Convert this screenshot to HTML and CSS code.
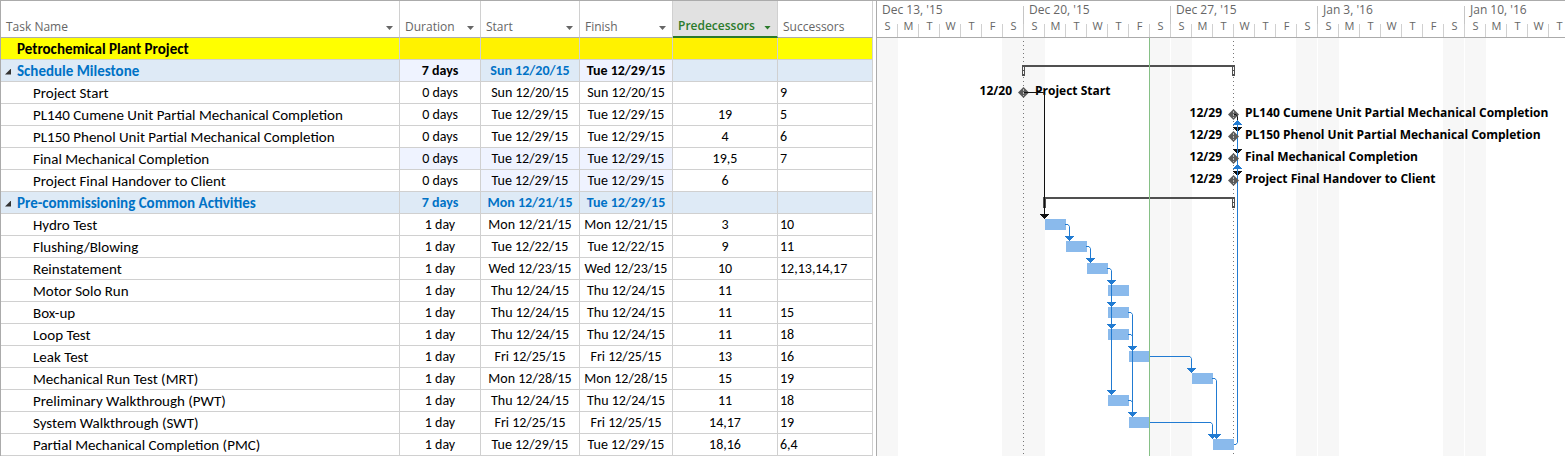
FILE: index.html
```html
<!DOCTYPE html>
<html lang="en">
<head>
<meta charset="utf-8">
<title>Petrochemical Plant Project</title>
<link rel="stylesheet" href="styles.css">
</head>
<body>
<main class="project">
<section class="sheet">
<table class="tasks">
<colgroup><col class="col-name"><col class="col-duration"><col class="col-start"><col class="col-finish"><col class="col-pred"><col class="col-succ"></colgroup>
<thead>
<tr>
<th><div class="head">Task Name<button class="drop" aria-label="Filter Task Name"></button></div></th>
<th><div class="head">Duration<button class="drop" aria-label="Filter Duration"></button></div></th>
<th><div class="head">Start<button class="drop" aria-label="Filter Start"></button></div></th>
<th><div class="head">Finish<button class="drop" aria-label="Filter Finish"></button></div></th>
<th class="active"><div class="head">Predecessors<button class="drop" aria-label="Filter Predecessors"></button></div></th>
<th><div class="head">Successors</div></th>
</tr>
</thead>
<tbody>
<tr class="project-row"><td class="top">Petrochemical Plant Project</td><td></td><td></td><td></td><td></td><td class="bright"></td></tr>
<tr class="summary"><td class="top"><button class="fold" aria-label="Collapse Schedule Milestone"></button>Schedule Milestone</td><td class="changed dark">7 days</td><td>Sun 12/20/15</td><td class="changed dark">Tue 12/29/15</td><td></td><td></td></tr>
<tr><td>Project Start</td><td>0 days</td><td>Sun 12/20/15</td><td>Sun 12/20/15</td><td></td><td>9</td></tr>
<tr><td>PL140 Cumene Unit Partial Mechanical Completion</td><td>0 days</td><td>Tue 12/29/15</td><td>Tue 12/29/15</td><td>19</td><td>5</td></tr>
<tr><td>PL150 Phenol Unit Partial Mechanical Completion</td><td>0 days</td><td>Tue 12/29/15</td><td>Tue 12/29/15</td><td>4</td><td>6</td></tr>
<tr><td>Final Mechanical Completion</td><td class="changed">0 days</td><td class="changed">Tue 12/29/15</td><td class="changed">Tue 12/29/15</td><td>19,5</td><td>7</td></tr>
<tr><td>Project Final Handover to Client</td><td>0 days</td><td class="changed">Tue 12/29/15</td><td class="changed">Tue 12/29/15</td><td>6</td><td></td></tr>
<tr class="summary"><td class="top"><button class="fold" aria-label="Collapse Pre-commissioning Common Activities"></button>Pre-commissioning Common Activities</td><td>7 days</td><td>Mon 12/21/15</td><td>Tue 12/29/15</td><td></td><td></td></tr>
<tr><td>Hydro Test</td><td>1 day</td><td>Mon 12/21/15</td><td>Mon 12/21/15</td><td>3</td><td>10</td></tr>
<tr><td>Flushing/Blowing</td><td>1 day</td><td>Tue 12/22/15</td><td>Tue 12/22/15</td><td>9</td><td>11</td></tr>
<tr><td>Reinstatement</td><td>1 day</td><td>Wed 12/23/15</td><td>Wed 12/23/15</td><td>10</td><td>12,13,14,17</td></tr>
<tr><td>Motor Solo Run</td><td>1 day</td><td>Thu 12/24/15</td><td>Thu 12/24/15</td><td>11</td><td></td></tr>
<tr><td>Box-up</td><td>1 day</td><td>Thu 12/24/15</td><td>Thu 12/24/15</td><td>11</td><td>15</td></tr>
<tr><td>Loop Test</td><td>1 day</td><td>Thu 12/24/15</td><td>Thu 12/24/15</td><td>11</td><td>18</td></tr>
<tr><td>Leak Test</td><td>1 day</td><td>Fri 12/25/15</td><td>Fri 12/25/15</td><td>13</td><td>16</td></tr>
<tr><td>Mechanical Run Test (MRT)</td><td>1 day</td><td>Mon 12/28/15</td><td>Mon 12/28/15</td><td>15</td><td>19</td></tr>
<tr><td>Preliminary Walkthrough (PWT)</td><td>1 day</td><td>Thu 12/24/15</td><td>Thu 12/24/15</td><td>11</td><td>18</td></tr>
<tr><td>System Walkthrough (SWT)</td><td>1 day</td><td>Fri 12/25/15</td><td>Fri 12/25/15</td><td>14,17</td><td>19</td></tr>
<tr><td>Partial Mechanical Completion (PMC)</td><td>1 day</td><td>Tue 12/29/15</td><td>Tue 12/29/15</td><td>18,16</td><td>6,4</td></tr>
</tbody>
</table>
</section>
<section class="gantt">
<header class="scale">
<div class="week"><div class="week-name">Dec 13, '15</div><div class="days"><span>S</span><span>M</span><span>T</span><span>W</span><span>T</span><span>F</span><span>S</span></div></div>
<div class="week"><div class="week-name">Dec 20, '15</div><div class="days"><span>S</span><span>M</span><span>T</span><span>W</span><span>T</span><span>F</span><span>S</span></div></div>
<div class="week"><div class="week-name">Dec 27, '15</div><div class="days"><span>S</span><span>M</span><span>T</span><span>W</span><span>T</span><span>F</span><span>S</span></div></div>
<div class="week"><div class="week-name">Jan 3, '16</div><div class="days"><span>S</span><span>M</span><span>T</span><span>W</span><span>T</span><span>F</span><span>S</span></div></div>
<div class="week"><div class="week-name">Jan 10, '16</div><div class="days"><span>S</span><span>M</span><span>T</span><span>W</span><span>T</span></div></div>
</header>
<svg class="chart" width="734" height="418" viewBox="877 38 734 418" role="img" aria-label="Gantt chart">
<defs>
<path id="down" d="M-4.500 -5h9v1h-1v1h-1v1h-1v1h-1v1h-1v-1h-1v-1h-1v-1h-1v-1h-1z"/>
<path id="up" d="M-4.500 5h9v-1h-1v-1h-1v-1h-1v-1h-1v-1h-1v1h-1v1h-1v1h-1v1h-1z"/>
<g id="milestone"><path d="M.5-5L6 .5.5 6-5 .5z"/><path class="facet" d="M.5-3v7"/></g>
</defs>
<g class="weekend">
<path d="M877 38h21v418h-21zM1002 38h43v418h-43zM1149 38h21v418h-21zM1171 38h21v418h-21zM1296 38h21v418h-21zM1318 38h21v418h-21zM1443 38h21v418h-21zM1465 38h21v418h-21zM1590 38h21v418h-21z"/>
</g>
<path class="marker" d="M1023.500 41V456M1233.500 41V456"/>
<g class="span">
<path d="M1022 65h213v11h-3v-9h-207v9h-3z"/><path d="M1043 197h192v11h-3v-9h-186v9h-3z"/>
<path class="notch" d="M1023.500 67v8M1233.500 67v8M1233.500 199v8"/>
</g>
<g class="bars">
<rect x="1045" y="219" width="21" height="11"/><rect x="1066" y="241" width="21" height="11"/><rect x="1087" y="263" width="21" height="11"/><rect x="1108" y="285" width="21" height="11"/><rect x="1108" y="307" width="21" height="11"/><rect x="1108" y="329" width="21" height="11"/><rect x="1129" y="351" width="21" height="11"/><rect x="1192" y="373" width="21" height="11"/><rect x="1108" y="395" width="21" height="11"/><rect x="1129" y="417" width="21" height="11"/><rect x="1213" y="439" width="21" height="11"/>
</g>
<path class="today" d="M1149.500 38V456"/>
<g class="links">
<path d="M1065 224.500h3l1.500 2V238M1086 246.500h3l1.500 2V260M1107 268.500h3l1.500 2V392M1128 312.500h3l1.500 2V414M1128 334.500h3l1.500 2M1128 400.500h3l1.500 2M1150 356.500h40l1.500 2V370M1212 378.500h3l1.500 2V436M1150 422.500h61l1.500 2V436M1234 444.500h2l1.500-2V123"/>
</g>
<g class="heads">
<use href="#down" x="1069.500" y="241"/><use href="#down" x="1090.500" y="263"/><use href="#down" x="1111.500" y="285"/><use href="#down" x="1111.500" y="307"/><use href="#down" x="1111.500" y="329"/><use href="#down" x="1111.500" y="395"/><use href="#down" x="1132.500" y="351"/><use href="#down" x="1132.500" y="417"/><use href="#down" x="1191.500" y="373"/><use href="#down" x="1212.500" y="439"/><use href="#down" x="1216.500" y="439"/>
<use href="#up" x="1237.500" y="120"/><use href="#up" x="1237.500" y="164"/>
</g>
<g class="critical-heads"><use href="#down" x="1044.500" y="219"/><use href="#down" x="1237.500" y="132"/><use href="#down" x="1237.500" y="154"/><use href="#down" x="1237.500" y="176"/></g>
<path class="links" d="M1237.500 125V200"/>
<g class="milestones">
<use href="#milestone" x="1023" y="92"/><use href="#milestone" x="1233" y="114"/><use href="#milestone" x="1233" y="136"/><use href="#milestone" x="1233" y="158"/><use href="#milestone" x="1233" y="180"/>
</g>
<g class="dates"><text x="1012" y="95">12/20</text><text x="1222" y="117">12/29</text><text x="1222" y="139">12/29</text><text x="1222" y="161">12/29</text><text x="1222" y="183">12/29</text></g>
<g class="names"><text x="1035" y="95">Project Start</text><text x="1245" y="117">PL140 Cumene Unit Partial Mechanical Completion</text><text x="1245" y="139">PL150 Phenol Unit Partial Mechanical Completion</text><text x="1245" y="161">Final Mechanical Completion</text><text x="1245" y="183">Project Final Handover to Client</text></g>
<path class="critical" d="M1024 92.500h19l1.500 1V215M1234 114.500h2l1.500 2V120"/>
</svg>
</section>
</main>
</body>
</html>
```
FILE: styles.css
```css
* { box-sizing: border-box; }
body { margin: 0; background: #fff; color: #000; font-family: Carlito, Lato, sans-serif; font-size: 14px; }
.project { display: flex; gap: 3px; border-top: 1px solid #ababab; overflow: hidden; }
.sheet { flex: none; border-left: 1px solid #ababab; }
.tasks { border-collapse: separate; border-spacing: 0; table-layout: fixed; width: 872px; }
.col-name { width: 399px; }
.col-duration { width: 81px; }
.col-start { width: 99px; }
.col-finish { width: 93px; }
.col-pred { width: 105px; }
.col-succ { width: 95px; }
th, td { padding: 0; border-right: 1px solid #d0d0d0; white-space: nowrap; }
th { height: 37px; border-bottom: 1px solid #ababab; font-family: "Open Sans", sans-serif; font-size: 12px; font-weight: 400; color: #666; vertical-align: bottom; }
.head { display: flex; align-items: center; justify-content: space-between; height: 22px; padding: 0 6px 0 5px; }
.active { background: #e1e1e1; color: #2b7a2b; font-weight: 600; border-bottom: 2px solid #2b7a2b; }
.active .head { height: 21px; }
.drop { width: 7px; height: 4px; padding: 0; border: 0; background: currentColor; color: inherit; clip-path: polygon(0 0, 100% 0, 50% 100%); margin-top: 4px; }
td { height: 22px; line-height: 20px; border-bottom: 1px solid #d0d0d0; text-align: center; }
td:first-child { padding-left: 32px; text-align: left; font-size: 15px; }
td:last-child { padding-left: 2px; text-align: left; }
td.top:first-child { padding-left: 16px; }
.project-row td { background: #fff200; font-weight: 700; }
.project-row .top, .project-row .bright { background: #ff0; }
.summary td { background: #deeaf6; color: #0072c6; font-weight: 700; }
.fold { width: 6px; height: 6px; margin: 0 6px 0 -12px; padding: 0; border: 0; background: #333; clip-path: polygon(100% 0, 100% 100%, 0 100%); vertical-align: 1px; }
td.changed, .summary td.changed { background: #eff3ff; }
.summary td.dark { color: #000; }
.gantt { flex: 1; min-width: 0; overflow: hidden; border-left: 1px solid #ababab; }
.scale { display: flex; height: 37px; border-bottom: 1px solid #ababab; font-family: "Open Sans", sans-serif; font-size: 12px; color: #666; }
.week { flex: none; width: 147px; display: flex; flex-direction: column; background: linear-gradient(#c6c6c6, #c6c6c6) 100% 100% / 1px 31px no-repeat; }
.week-name { height: 18px; line-height: 18px; padding-left: 5px; }
.days { flex: 1; display: grid; grid-template-columns: repeat(7, 1fr); font-size: 11px; line-height: 14px; text-align: center; }
.days span { background: linear-gradient(#d0d0d0, #d0d0d0) 100% 100% / 1px 13px no-repeat; }
.chart { display: block; font-family: "Open Sans", sans-serif; font-size: 12px; font-weight: 700; }
.weekend { fill: #f7f7f7; }
.marker { stroke: #777; stroke-dasharray: 1 3; }
.span { fill: #505050; }
.notch { stroke: #f7f7f7; stroke-dasharray: 3 1; }
.facet { stroke: #bbb; stroke-dasharray: 2 1; }
.bars { fill: #8abaec; }
.today { stroke: #86c086; }
.links, .critical { fill: none; stroke: #217bd2; }
.heads { fill: #217bd2; }
.critical { stroke: #111; }
.critical-heads { fill: #111; }
.milestones { fill: #5a5a5a; }
.dates { text-anchor: end; }
```
